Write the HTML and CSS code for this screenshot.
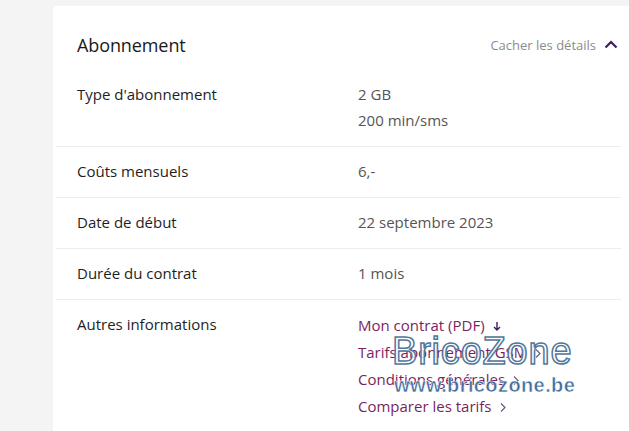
FILE: index.html
```html
<!DOCTYPE html>
<html lang="fr">
<head>
<meta charset="utf-8">
<title>Abonnement</title>
<link rel="stylesheet" href="styles.css">
</head>
<body>
<div class="page">
  <section class="card">
    <header class="card-head">
      <h2 class="title">Abonnement</h2>
      <button class="toggle">Cacher les détails
        <svg class="chev-up" width="14" height="9" viewBox="0 0 14 9"><path d="M1.5 7.5 L7 2 L12.5 7.5" fill="none" stroke="#3b1d5e" stroke-width="2.2"/></svg>
      </button>
    </header>
    <div class="rows">
      <div class="row">
        <div class="label">Type d'abonnement</div>
        <div class="value">2 GB<br>200 min/sms</div>
      </div>
      <div class="row">
        <div class="label">Coûts mensuels</div>
        <div class="value">6,-</div>
      </div>
      <div class="row">
        <div class="label">Date de début</div>
        <div class="value">22 septembre 2023</div>
      </div>
      <div class="row">
        <div class="label">Durée du contrat</div>
        <div class="value">1 mois</div>
      </div>
      <div class="row last">
        <div class="label">Autres informations</div>
        <div class="value links">
          <a class="link">Mon contrat (PDF) <svg class="ico" width="10" height="12" viewBox="0 0 10 12"><path d="M5 2 V10 M2 7 L5 10 L8 7" fill="none" stroke="#3b1d5e" stroke-width="1.4"/></svg></a>
          <a class="link">Tarifs abonnement GSM <svg class="ico" width="8" height="12" viewBox="0 0 8 12"><path d="M2 2.5 L6 6.5 L2 10.5" fill="none" stroke="#6e5a78" stroke-width="1.2"/></svg></a>
          <a class="link">Conditions générales <svg class="ico" width="8" height="12" viewBox="0 0 8 12"><path d="M2 2.5 L6 6.5 L2 10.5" fill="none" stroke="#6e5a78" stroke-width="1.2"/></svg></a>
          <a class="link">Comparer les tarifs <svg class="ico" width="8" height="12" viewBox="0 0 8 12"><path d="M2 2.5 L6 6.5 L2 10.5" fill="none" stroke="#6e5a78" stroke-width="1.2"/></svg></a>
        </div>
      </div>
    </div>
    <div class="watermark">
      <span class="wm-big">BricoZone</span>
      <span class="wm-small">www.bricozone.be</span>
    </div>
  </section>
</div>
</body>
</html>
```
FILE: styles.css
```css
html, body {
  margin: 0;
  padding: 0;
  background: #f4f4f4;
  font-family: "Open Sans", "Liberation Sans", sans-serif;
  overflow: hidden;
}
.page {
  padding: 6px 0 0 53px;
  height: 425px;
}
.card {
  position: relative;
  background: #fff;
  border-radius: 4px 0 0 0;
  height: 100%;
  padding: 24px 0 0 0;
  box-sizing: border-box;
}
.card-head {
  display: flex;
  justify-content: space-between;
  align-items: center;
  padding: 0 11px 0 24px;
  height: 30px;
  margin-bottom: 10px;
}
.title {
  margin: 0;
  font-size: 18px;
  font-weight: 400;
  color: #1a1a1a;
  letter-spacing: -0.1px;
}
.toggle {
  border: 0;
  background: none;
  padding: 0;
  font-family: inherit;
  font-size: 13px;
  color: #8c8c8c;
  display: flex;
  align-items: center;
  gap: 8px;
}
.chev-up { display: block; margin-top: -2px; }
.rows {
  margin: 0 8px 0 3px;
}
.row {
  display: flex;
  padding: 11px 0 13px 21px;
  border-bottom: 1px solid #ececec;
  line-height: 26px;
  font-size: 15px;
}
.row.last { border-bottom: 0; }
.label {
  width: 281px;
  flex: none;
  color: #1e1e1e;
}
.value {
  color: #555;
}
.links {
  display: flex;
  flex-direction: column;
  line-height: 27px;
  padding-top: 1px;
}
.link {
  color: #7b1f5e;
  display: flex;
  align-items: center;
  gap: 7px;
}
.ico { display: block; }
.watermark {
  position: absolute;
  left: 339px;
  top: 326px;
  display: flex;
  flex-direction: column;
  align-items: flex-start;
  pointer-events: none;
}
.wm-big {
  font-family: "Liberation Sans", Arial, sans-serif;
  font-size: 38px;
  line-height: 38px;
  color: rgba(255,255,255,0.85);
  -webkit-text-stroke: 1.5px #52779c;
  letter-spacing: 0.8px;
}
.wm-small {
  font-family: "Liberation Sans", Arial, sans-serif;
  font-weight: bold;
  font-size: 20px;
  line-height: 20px;
  margin-top: 5px;
  margin-left: 2px;
  color: #3f6c9a;
  -webkit-text-stroke: 0.5px #ffffff;
  letter-spacing: 0.4px;
}
```
